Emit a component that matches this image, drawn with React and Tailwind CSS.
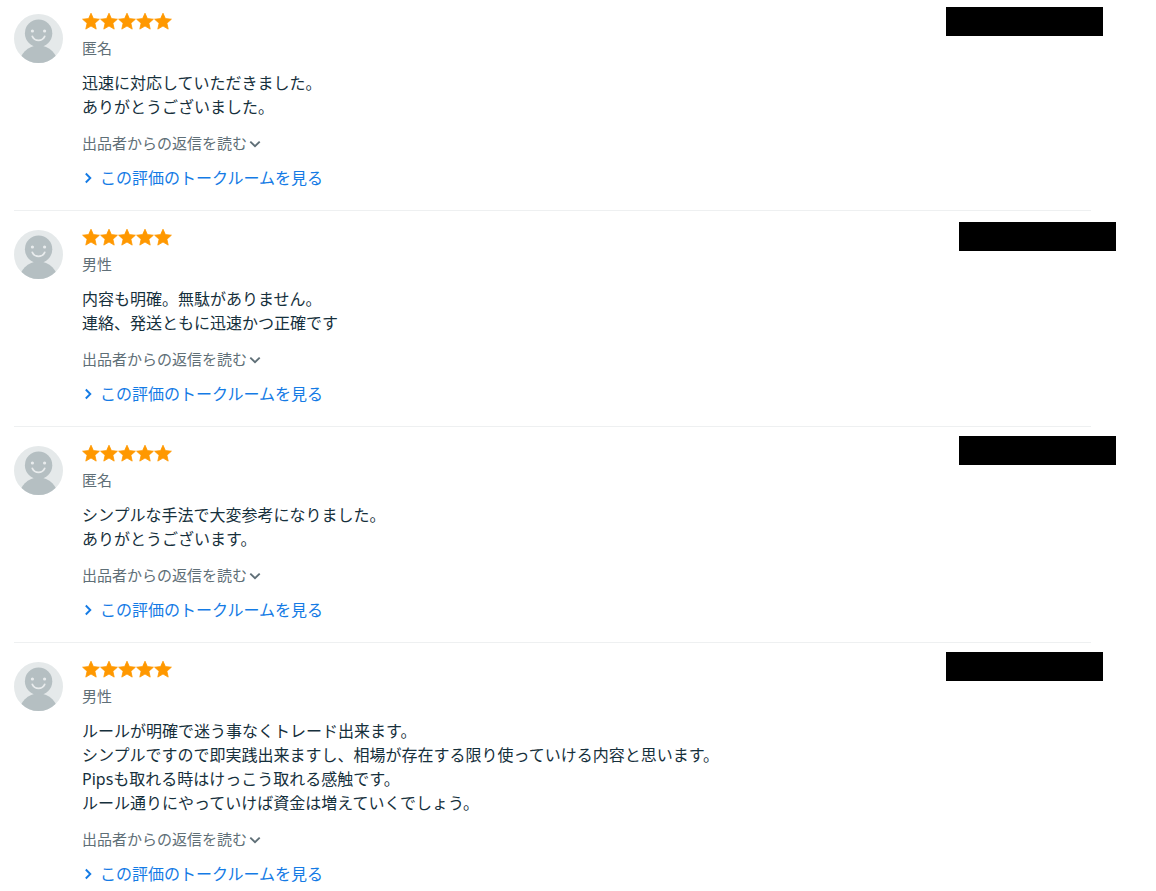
const reviews = [
  {
    id: 1,
    user: '匿名',
    lines: ['迅速に対応していただきました。', 'ありがとうございました。'],
    maskClass: '-mt-[5px] -mr-3',
  },
  {
    id: 2,
    user: '男性',
    lines: ['内容も明確。無駄がありません。', '連絡、発送ともに迅速かつ正確です'],
    maskClass: '-mt-1.5 -mr-[25px]',
  },
  {
    id: 3,
    user: '匿名',
    lines: ['シンプルな手法で大変参考になりました。', 'ありがとうございます。'],
    maskClass: '-mt-2 -mr-[25px]',
  },
  {
    id: 4,
    user: '男性',
    lines: [
      'ルールが明確で迷う事なくトレード出来ます。',
      'シンプルですので即実践出来ますし、相場が存在する限り使っていける内容と思います。',
      'Pipsも取れる時はけっこう取れる感触です。',
      'ルール通りにやっていけば資金は増えていくでしょう。',
    ],
    maskClass: '-mt-2 -mr-3',
  },
];

function Avatar({ id }) {
  const clipId = `avatar-${id}`;
  return (
    <svg viewBox="0 0 49 49" className="w-[49px] h-[49px] mt-0.5 shrink-0" aria-hidden="true">
      <clipPath id={clipId}>
        <circle cx="24.5" cy="24.5" r="24.5" />
      </clipPath>
      <g clipPath={`url(#${clipId})`}>
        <rect width="49" height="49" fill="#e5e9ea" />
        <circle cx="24.6" cy="19.2" r="13.7" fill="#b5bfc2" />
        <ellipse cx="24.6" cy="51" rx="19.5" ry="19.5" fill="#b5bfc2" />
        <circle cx="18.4" cy="17" r="1.6" fill="#e9eced" />
        <circle cx="30.6" cy="17" r="1.6" fill="#e9eced" />
        <path
          d="M18.3 22.3c1.2 2.6 3.5 4 6.2 4s5-1.4 6.2-4"
          fill="none"
          stroke="#e9eced"
          strokeWidth="1.7"
          strokeLinecap="round"
        />
      </g>
    </svg>
  );
}

function Stars() {
  return (
    <div className="flex" role="img" aria-label="5">
      {[1, 2, 3, 4, 5].map((n) => (
        <svg key={n} viewBox="0 0 18 18" className="w-[18px] h-[18px]" aria-hidden="true">
          <path
            d="M9 1.2l2.4 5.4 6 .6-4.5 4 1.3 5.9L9 14l-5.2 3.1 1.3-5.9-4.5-4 6-.6z"
            fill="#ff9800"
            stroke="#ff9800"
            strokeWidth=".8"
            strokeLinejoin="round"
          />
        </svg>
      ))}
    </div>
  );
}

function Review({ review }) {
  return (
    <li className="flex items-start gap-[19px] pb-5 border-b border-[#eef0f1] not-first:pt-[17px] last:border-b-0">
      <Avatar id={review.id} />
      <div className="flex-1 min-w-0">
        <Stars />
        <p className="mt-1.5 text-[15px] leading-6 text-[#5f6f77]">{review.user}</p>
        <p className="mt-[11px] text-base leading-6">
          {review.lines.map((line) => (
            <span key={line} className="block">
              {line}
            </span>
          ))}
        </p>
        <button
          type="button"
          className="mt-3 flex items-center gap-0.5 text-[15px] leading-6 text-[#5f6f77] cursor-pointer"
        >
          出品者からの返信を読む
          <svg viewBox="0 0 12 12" className="w-3 h-3 mt-0.5" aria-hidden="true">
            <path d="M1.3 3.6L6 8.2l4.7-4.6" fill="none" stroke="currentColor" strokeWidth="1.9" />
          </svg>
        </button>
        <a
          href="#talkroom"
          className="mt-[11px] w-fit flex items-center gap-1.5 text-base leading-6 text-[#147be5]"
        >
          <svg viewBox="0 0 12 12" className="w-3 h-3" aria-hidden="true">
            <path d="M3.8 1.5L8.3 6l-4.5 4.5" fill="none" stroke="currentColor" strokeWidth="1.9" />
          </svg>
          この評価のトークルームを見る
        </a>
      </div>
      {/* Masked date */}
      <div className={`w-[157px] h-[29px] shrink-0 bg-black ${review.maskClass}`} />
    </li>
  );
}

export default function App() {
  return (
    <main
      lang="ja"
      className="bg-white pt-3 pl-3.5 pr-[65px] text-[#16303c] font-['Noto_Sans','Noto_Sans_CJK_JP',sans-serif]"
    >
      <ul>
        {reviews.map((review) => (
          <Review key={review.id} review={review} />
        ))}
      </ul>
    </main>
  );
}
